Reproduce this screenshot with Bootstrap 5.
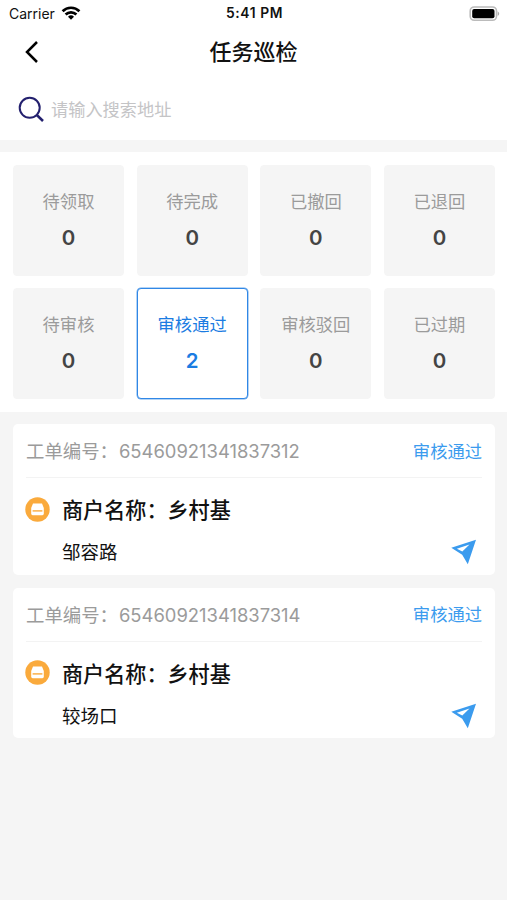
<!DOCTYPE html>
<html lang="zh-CN">
<head>
<meta charset="utf-8">
<meta name="viewport" content="width=device-width, initial-scale=1">
<title>任务巡检</title>
<link href="https://cdn.jsdelivr.net/npm/bootstrap@5.3.0/dist/css/bootstrap.min.css" rel="stylesheet">
<style>
body{background:#f5f5f5;font-family:Inter,"Noto Sans CJK SC",sans-serif;color:#111;line-height:1;min-height:900px;overflow:hidden}
svg{display:block;flex:none}
.status{height:28px;padding:0 7px 0 9px;font-size:14px}
.status>*{flex:1 1 0}
.wifi{margin-left:6px;margin-bottom:2px}
.time{font-size:13.8px;letter-spacing:.6px}
.title-bar{height:48px;padding:0 24px}
.title-bar h1{font-size:22px;font-weight:500;color:#111;padding-top:1px}
.side{width:16px}
.search{height:64px;padding:2px 18px 0;gap:6px}
.search input{font-size:17.2px;color:#333;background:none;outline:0}
.search input::placeholder{color:#c4c4c6;opacity:1}
.stats{display:grid;grid-template-columns:repeat(4,111px);justify-content:space-between;row-gap:12px;margin-top:12px;padding:13px 12px 13px 13px}
.stat{height:111px;border-radius:4px;background:#f5f5f5;border:1px solid #f5f5f5;color:#9b9b9b;font-size:17.3px;padding-bottom:1px;gap:15px}
.stat b{font-size:20.5px;font-weight:600;color:#444;line-height:21px}
.stat span{line-height:20px}
.stat.on{background:#fff;border-color:#3087e6;box-shadow:0 0 0 .5px #6aa9ec;color:#1b7ce2}
.stat.on b{color:#1b7ce2}
.orders{padding:12px 12px 0 13px;gap:13px}
.order{height:150.5px;border-radius:5px;padding:0 13px}
.order-head{height:54px;padding-top:2px;border-bottom:1px solid #f3f3f3;font-size:18.4px;color:#9b9b9b}
.num{margin-left:1px}
.state{font-size:17.3px;color:#3b9bee}
.order-body{padding-top:18px}
.shop{font-size:21.1px;font-weight:500;line-height:26px;gap:12px;margin-left:-1px}
.shop span{padding-top:2px;margin-bottom:-2px}
.addr{font-size:18.5px;line-height:24px;padding-left:36px;padding-right:5px;margin-top:17px}
</style>
</head>
<body>
<header class="bg-white">
  <div class="status d-flex align-items-center">
    <div class="d-flex align-items-center"><span>Carrier</span>
      <svg class="wifi" width="20" height="14" viewBox="0 0 20 14" fill="none" stroke="#000" stroke-width="2.7"><path d="M1.6 5.2a12 12 0 0 1 16.8 0M4.6 8.5a7.7 7.7 0 0 1 10.8 0"/><path d="M7 10.8a4.3 4.3 0 0 1 6 0l-3 3z" fill="#000" stroke="none"/></svg>
    </div>
    <div class="time text-center fw-semibold">5:41 PM</div>
    <div class="d-flex justify-content-end"><svg width="31" height="16" viewBox="0 0 31 16"><rect x="1.2" y="1" width="26.3" height="13.3" rx="4" fill="#fff" stroke="#bbb" stroke-width="1.6"/><rect x="3.2" y="3" width="22.3" height="9.3" rx="2" fill="#000"/><path d="M28.7 5.3q3 2.4 0 4.8z" fill="#aaa"/></svg></div>
  </div>
  <div class="title-bar d-flex align-items-center justify-content-between">
    <svg class="side" height="24" viewBox="0 0 16 24" fill="none" stroke="#000" stroke-width="2.5"><path d="M13 2 3 12l10 10"/></svg>
    <h1 class="mb-0">任务巡检</h1>
    <span class="side"></span>
  </div>
  <div class="search d-flex align-items-center">
    <svg width="27" height="27" viewBox="0 0 27 27" fill="none" stroke="#23206e" stroke-width="2"><circle cx="11.7" cy="11.8" r="10"/><path d="m18.8 19 6.2 6" stroke-width="2.5"/></svg>
    <input class="border-0 p-0 flex-grow-1" type="text" placeholder="请输入搜索地址">
  </div>
</header>
<section class="stats bg-white">
  <div class="stat d-flex flex-column align-items-center justify-content-center"><span>待领取</span><b>0</b></div>
  <div class="stat d-flex flex-column align-items-center justify-content-center"><span>待完成</span><b>0</b></div>
  <div class="stat d-flex flex-column align-items-center justify-content-center"><span>已撤回</span><b>0</b></div>
  <div class="stat d-flex flex-column align-items-center justify-content-center"><span>已退回</span><b>0</b></div>
  <div class="stat d-flex flex-column align-items-center justify-content-center"><span>待审核</span><b>0</b></div>
  <div class="stat on d-flex flex-column align-items-center justify-content-center"><span>审核通过</span><b>2</b></div>
  <div class="stat d-flex flex-column align-items-center justify-content-center"><span>审核驳回</span><b>0</b></div>
  <div class="stat d-flex flex-column align-items-center justify-content-center"><span>已过期</span><b>0</b></div>
</section>
<main class="orders d-flex flex-column">
  <article class="order bg-white">
    <div class="order-head d-flex align-items-center justify-content-between"><div>工单编号：<span class="num">65460921341837312</span></div><span class="state">审核通过</span></div>
    <div class="order-body">
      <div class="shop d-flex align-items-center"><svg width="25" height="25" viewBox="0 0 25 25"><circle cx="12.5" cy="12.5" r="12.2" fill="#faaa3c"/><path d="M8 6.5h9l1.8 4.5v5.8a1.4 1.4 0 0 1-1.4 1.4H7.6a1.4 1.4 0 0 1-1.4-1.4V11z" fill="#fff"/><path d="M7.6 13.9h9.8" fill="none" stroke="#faaa3c" stroke-width="1.4"/></svg><span>商户名称：乡村基</span></div>
      <div class="addr d-flex align-items-center justify-content-between"><span>邹容路</span><svg width="26" height="26" viewBox="0 0 26 26"><path d="M.3 8.8 25 .8l-8.2 24.4-5.6-9.4z" fill="#3b9bee"/><path d="M5.8 9.8 18.5 5.4l-7.2 7.2z" fill="#fff"/></svg></div>
    </div>
  </article>
  <article class="order bg-white">
    <div class="order-head d-flex align-items-center justify-content-between"><div>工单编号：<span class="num">65460921341837314</span></div><span class="state">审核通过</span></div>
    <div class="order-body">
      <div class="shop d-flex align-items-center"><svg width="25" height="25" viewBox="0 0 25 25"><circle cx="12.5" cy="12.5" r="12.2" fill="#faaa3c"/><path d="M8 6.5h9l1.8 4.5v5.8a1.4 1.4 0 0 1-1.4 1.4H7.6a1.4 1.4 0 0 1-1.4-1.4V11z" fill="#fff"/><path d="M7.6 13.9h9.8" fill="none" stroke="#faaa3c" stroke-width="1.4"/></svg><span>商户名称：乡村基</span></div>
      <div class="addr d-flex align-items-center justify-content-between"><span>较场口</span><svg width="26" height="26" viewBox="0 0 26 26"><path d="M.3 8.8 25 .8l-8.2 24.4-5.6-9.4z" fill="#3b9bee"/><path d="M5.8 9.8 18.5 5.4l-7.2 7.2z" fill="#fff"/></svg></div>
    </div>
  </article>
</main>
<script src="https://cdn.jsdelivr.net/npm/bootstrap@5.3.0/dist/js/bootstrap.bundle.min.js"></script>
</body>
</html>
